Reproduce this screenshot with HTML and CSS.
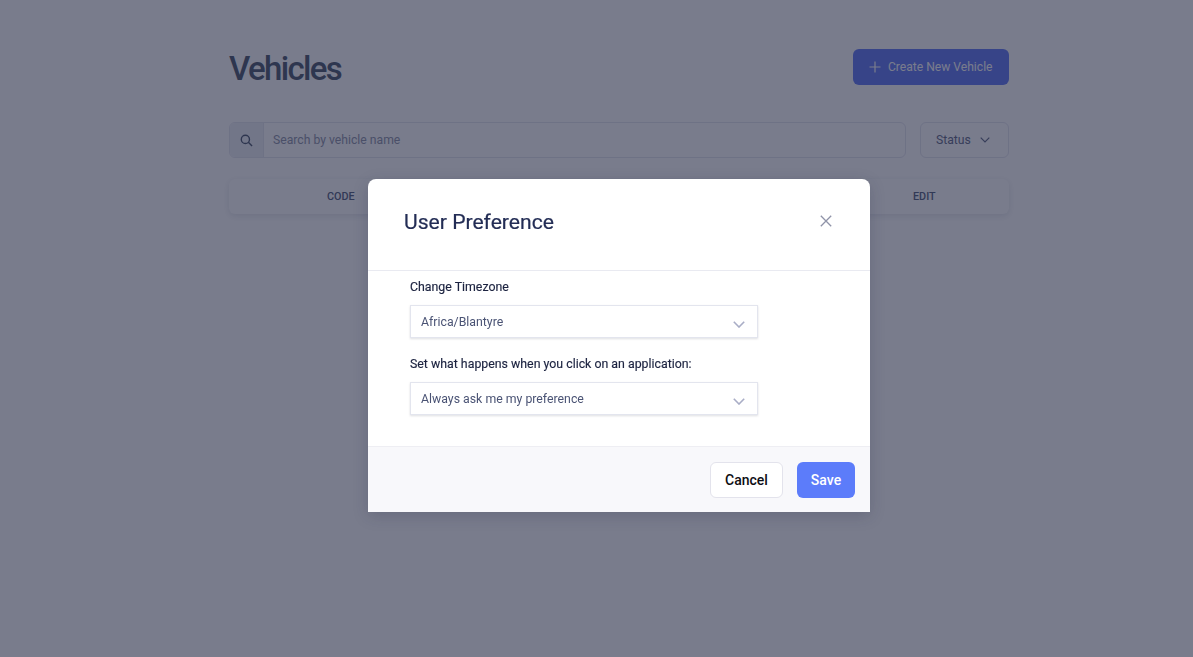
FILE: index.html
```html
<!DOCTYPE html>
<html lang="en">
<head>
  <meta charset="UTF-8">
  <meta name="viewport" content="width=device-width, initial-scale=1.0">
  <title>Vehicles</title>
  <link rel="stylesheet" href="styles.css">
</head>
<body>
  <div class="container">
    <!-- Page header -->
    <div class="page-header">
      <h1>Vehicles</h1>
      <button class="create-btn">
        <svg width="12" height="12" viewBox="0 0 12 12"><path d="M6 0.5v11M0.5 6h11" stroke="currentColor" stroke-width="1.2" fill="none"/></svg>
        Create New Vehicle
      </button>
    </div>

    <!-- Search and filter -->
    <div class="toolbar">
      <div class="search">
        <span class="search-icon">
          <svg width="13" height="13" viewBox="0 0 14 14"><circle cx="5.8" cy="5.8" r="4.4" stroke="currentColor" stroke-width="1.5" fill="none"/><path d="M9 9l4 4" stroke="currentColor" stroke-width="1.5" fill="none"/></svg>
        </span>
        <span class="search-text">Search by vehicle name</span>
      </div>
      <button class="status-btn">
        Status
        <svg width="10" height="6" viewBox="0 0 10 6"><path d="M0.7 0.7L5 5l4.3-4.3" stroke="currentColor" stroke-width="1.2" fill="none"/></svg>
      </button>
    </div>

    <!-- Table head -->
    <div class="table-head">
      <span class="col-code">CODE</span>
      <span class="col-edit">EDIT</span>
    </div>
  </div>

  <!-- User preference modal -->
  <div class="overlay">
    <div class="modal">
      <div class="modal-header">
        <h2>User Preference</h2>
        <svg class="close" width="12" height="12" viewBox="0 0 12 12"><path d="M0.8 0.8l10.4 10.4M11.2 0.8L0.8 11.2" stroke="currentColor" stroke-width="1.3" fill="none"/></svg>
      </div>
      <div class="modal-body">
        <label>Change Timezone</label>
        <div class="select">
          Africa/Blantyre
          <svg width="12" height="7" viewBox="0 0 12 7"><path d="M0.8 0.8L6 6l5.2-5.2" stroke="currentColor" stroke-width="1.6" fill="none"/></svg>
        </div>
        <label>Set what happens when you click on an application:</label>
        <div class="select">
          Always ask me my preference
          <svg width="12" height="7" viewBox="0 0 12 7"><path d="M0.8 0.8L6 6l5.2-5.2" stroke="currentColor" stroke-width="1.6" fill="none"/></svg>
        </div>
      </div>
      <div class="modal-footer">
        <button class="cancel-btn">Cancel</button>
        <button class="save-btn">Save</button>
      </div>
    </div>
  </div>
</body>
</html>
```

FILE: styles.css
```css
/* Page behind the modal */
body {
  margin: 0;
  height: 657px;
  overflow: hidden;
  background-color: #ffffff;
  color: #2f3a5f;
  font-family: 'Roboto', sans-serif;
}

.container {
  width: 780px;
  margin-left: 229px;
  padding-top: 49px;
}

.page-header {
  display: flex;
  justify-content: space-between;
  align-items: flex-start;
  height: 73px;
}

h1 {
  margin: 1px 0 0;
  font-size: 33px;
  line-height: 38px;
  font-weight: 500;
  letter-spacing: -1.65px;
  color: #445068;
}

.create-btn {
  display: flex;
  align-items: center;
  gap: 7px;
  width: 156px;
  height: 36px;
  padding: 0 0 0 16px;
  border: none;
  border-radius: 6px;
  background-color: #5a73f5;
  color: #ffffff;
  font-family: inherit;
  font-size: 12.1px;
  white-space: nowrap;
}

.toolbar {
  display: flex;
  gap: 14px;
  height: 36px;
}

.search {
  flex: 1;
  display: flex;
  align-items: center;
  border: 1px solid #e3e5ee;
  border-radius: 6px;
  overflow: hidden;
}

.search-icon {
  display: flex;
  align-items: center;
  justify-content: center;
  width: 33px;
  height: 100%;
  background-color: #eef0f6;
  border-right: 1px solid #e3e5ee;
  color: #445068;
}

.search-text {
  margin-left: 9px;
  font-size: 12.2px;
  color: #8b90a6;
}

.status-btn {
  display: flex;
  align-items: center;
  gap: 9px;
  width: 89px;
  padding: 0 0 0 15px;
  border: 1px solid #e3e5ee;
  border-radius: 6px;
  background-color: #ffffff;
  color: #5a6382;
  font-family: inherit;
  font-size: 12.2px;
}

.table-head {
  position: relative;
  height: 35px;
  margin-top: 21px;
  border-radius: 6px;
  box-shadow: 0 2px 6px rgba(32, 44, 85, 0.12);
  font-size: 10.8px;
  font-weight: 500;
  line-height: 35px;
  color: #4d5779;
}

.col-code {
  position: absolute;
  left: 98px;
}

.col-edit {
  position: absolute;
  left: 684px;
}

/* Modal */
.overlay {
  position: fixed;
  inset: 0;
  padding: 179px 0 0 368px;
  background-color: rgba(32, 37, 63, 0.6);
}

.modal {
  width: 502px;
  height: 333px;
  display: flex;
  flex-direction: column;
  background-color: #ffffff;
  border-radius: 8px 8px 0 0;
  box-shadow: 0 4px 16px rgba(32, 37, 63, 0.2);
  font-family: 'Roboto', sans-serif;
  overflow: hidden;
}

.modal-header {
  display: flex;
  justify-content: space-between;
  align-items: center;
  height: 92px;
  padding: 0 38px 7px 36px;
  border-bottom: 1px solid #e9eaf1;
  box-sizing: border-box;
  flex-shrink: 0;
}

h2 {
  margin: 0;
  font-size: 21.1px;
  font-weight: 400;
  color: #232d55;
  -webkit-text-stroke: 0.2px #232d55;
}

.close {
  color: #8f93a8;
}

.modal-body {
  flex: 1;
  padding: 8px 0 0 42px;
}

label {
  display: block;
  margin-bottom: 10px;
  font-size: 12.35px;
  line-height: 16px;
  font-weight: 400;
  color: #1c2340;
  -webkit-text-stroke: 0.15px #1c2340;
}

.select {
  display: flex;
  justify-content: space-between;
  align-items: center;
  width: 348px;
  height: 33px;
  margin-bottom: 18px;
  padding: 0 12px 0 10px;
  box-sizing: border-box;
  border: 1px solid #e3e5ee;
  box-shadow: 0 1px 2px rgba(32, 37, 63, 0.15);
  font-size: 12.3px;
  color: #4a5374;
}

.select svg {
  margin-top: 5px;
  color: #a9adc6;
}

.modal-footer {
  display: flex;
  justify-content: flex-end;
  align-items: center;
  gap: 14px;
  height: 66px;
  padding-right: 15px;
  box-sizing: border-box;
  background-color: #f8f8fb;
  border-top: 1px solid #eeeef3;
}

.modal-footer button {
  height: 36px;
  padding-top: 2px;
  border-radius: 6px;
  font-family: inherit;
  font-size: 14px;
  font-weight: 500;
}

.cancel-btn {
  width: 73px;
  border: 1px solid #e3e3ec;
  background-color: #ffffff;
  color: #0d0d12;
}

.save-btn {
  width: 58px;
  border: none;
  background-color: #5c7cfa;
  color: #ffffff;
}
```
